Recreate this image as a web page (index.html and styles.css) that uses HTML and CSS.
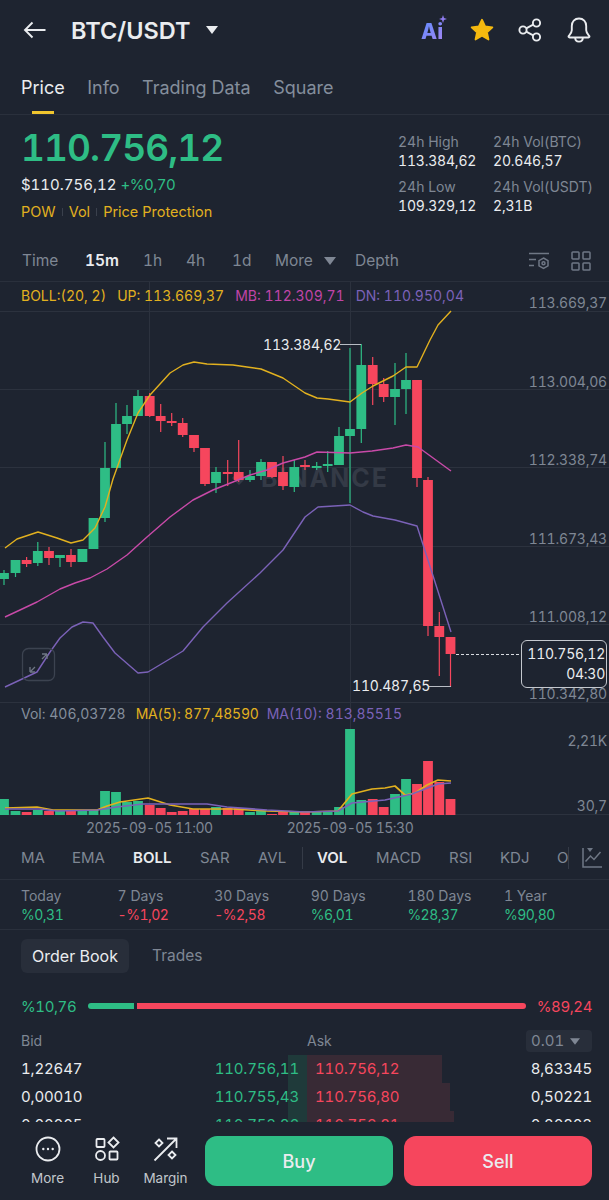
FILE: index.html
```html
<!DOCTYPE html>
<html lang="en">
<head>
<meta charset="utf-8">
<title>BTC/USDT</title>
<link rel="stylesheet" href="styles.css">
</head>
<body>
<div class="app">
  <header class="topbar">
    <svg class="ico-back" viewBox="0 0 24 18" width="24" height="18"><path d="M22.5 9H2M9.5 1.5 2 9l7.5 7.5"/></svg>
    <h1 class="pair">BTC/USDT</h1>
    <svg class="ico-caret" viewBox="0 0 12 8" width="12" height="8"><path d="M0 0h12L6 8z"/></svg>
    <div class="top-actions">
      <span class="ai"><span class="ai-text">Ai</span><svg class="ai-spark" viewBox="0 0 8 8" width="8" height="8"><path d="M4 0 5 3l3 1-3 1-1 3-1-3-3-1 3-1z"/></svg></span>
      <svg class="ico-star" viewBox="0 0 24 24" width="26" height="26"><path d="M12 2.5l2.9 6.2 6.7.8-5 4.6 1.4 6.7-6-3.4-6 3.4 1.4-6.7-5-4.6 6.7-.8z"/></svg>
      <svg class="ico-line ico-share" viewBox="0 0 24 24" width="24" height="24"><circle cx="18.5" cy="5" r="3.6"/><circle cx="5" cy="12" r="3.6"/><circle cx="18.5" cy="19" r="3.6"/><path d="M8.2 10.3l7-3.6M8.2 13.7l7 3.6"/></svg>
      <svg class="ico-line ico-bell" viewBox="0 0 24 26" width="24" height="26"><path d="M12 1.5c-4.4 0-7.2 3.3-7.2 7.4v4.4c0 2.400-1.600 3.800-3 5.500-.6.800-.2 1.700.8 1.700h18.800c1 0 1.400-.9.8-1.700-1.400-1.700-3-3.100-3-5.500V8.900c0-4.100-2.800-7.400-7.200-7.400z"/><path d="M8.200 20.800c0 2.300 1.700 3.800 3.800 3.800s3.800-1.500 3.800-3.800"/></svg>
    </div>
  </header>

  <nav class="tabs">
    <span class="tab tab-on">Price</span>
    <span class="tab">Info</span>
    <span class="tab">Trading Data</span>
    <span class="tab">Square</span>
  </nav>

  <section class="ticker">
    <div class="ticker-main">
      <div class="last">110.756,12</div>
      <div class="sub"><span class="sub-usd">$110.756,12</span> <span class="up sub-pct">+%0,70</span></div>
      <div class="tags"><span>POW</span><i></i><span>Vol</span><i></i><span>Price Protection</span></div>
    </div>
    <div class="ticker-stats">
      <div class="stat"><span>24h High</span><b>113.384,62</b></div>
      <div class="stat"><span>24h Vol(BTC)</span><b>20.646,57</b></div>
      <div class="stat"><span>24h Low</span><b>109.329,12</b></div>
      <div class="stat"><span>24h Vol(USDT)</span><b>2,31B</b></div>
    </div>
  </section>

  <div class="intervals">
    <span class="iv iv-time">Time</span>
    <span class="iv iv-15 iv-on">15m</span>
    <span class="iv iv-1h">1h</span>
    <span class="iv iv-4h">4h</span>
    <span class="iv iv-1d">1d</span>
    <span class="iv iv-more">More</span>
    <svg class="ico-more" viewBox="0 0 12 8" width="12" height="8"><path d="M0 0h12L6 8z"/></svg>
    <span class="iv iv-depth">Depth</span>
    <svg class="ico-dim ico-set" viewBox="0 0 22 20" width="22" height="20"><path d="M1 1.500h20M1 7.500h7M1 13.500h5"/><path d="M15.500 6l4.500 2.600v5.200L15.500 16.400 11 13.800V8.600z"/><circle cx="15.500" cy="11.200" r="1.500"/></svg>
    <svg class="ico-dim ico-grid" viewBox="0 0 20 20" width="20" height="20"><rect x="1" y="1" width="7" height="7" rx=".8"/><rect x="12" y="1" width="7" height="7" rx=".8"/><rect x="1" y="12" width="7" height="7" rx=".8"/><rect x="12" y="12" width="7" height="7" rx=".8"/></svg>
  </div>

  <div class="legend guides">
    <span class="c-yel">BOLL:(20, 2)</span>
    <span class="c-yel">UP: 113.669,37</span>
    <span class="c-mag">MB: 112.309,71</span>
    <span class="c-pur">DN: 110.950,04</span>
  </div>

  <svg class="plot" viewBox="0 311 609 392" width="609" height="392">
    <path class="grid" d="M0 311.500H609M0 389.500H609M0 467.500H609M0 546.500H609M0 624.500H609M0 702.500H609M149.500 311V703M350.500 311V703"/>
    <path class="mark" d="M232 478l7-7 7 7-7 7z"/>
    <text class="wm" x="261" y="487">BINANCE</text>
    <path class="wick-g" d="M4 570V585M15.500 560V577M37.800 542V566M60 555V567M105 442V522M116 403V467M127 405V434M138 390V416M216 467V493M250 470V482M261 459V480M294.300 460V492M316.700 462V470M327.700 451V472M339 427V465M350 348V503M361.300 344V443M395 363V425M406 353V414"/>
    <path class="body-g" d="M4 573V579M15.500 560V573M37.800 551V563M60 555V558M82.400 549V562M93.500 518V549M105 468V518M116 424V468M127 416V424M138 396V416M216 472V483M250 476V480M261 462V476M294.300 467V487M316.700 466V468M327.700 464V466M339 436V465M350 429V436M361.300 365V429M395 389V397M406 380V389"/>
    <path class="wick-r" d="M26.600 557V567M49 547V565M71 549V567M149.700 393V417M160.700 404V432M171.700 413V426M182.700 418V437M194 435V452M205 448V486M227.700 460V486M238.700 440V482M272 462V478M283 456V490M305 460V470M372.700 357V405M383.700 378V402M417 380V487M428 477V636M439.300 612V676M450.500 637V687"/>
    <path class="body-r" d="M26.600 560V564M49 551V558M71 555V562M149.700 396V416M160.700 416V421M171.700 421V423M182.700 423V435M194 435V448M205 448V484M227.700 472V474M238.700 472V480M272 462V477M283 472V486M305 465V467M372.700 365V384M383.700 384V397M417 380V478M428 480V626M439.300 626V637M450.500 637V654"/>
    <polyline class="ln-y" points="5,548 17,539 38,532 57,538 71,543 83,540 95,528 105,507 113,479 127,440 138,413 150,395 170,373 183,365 194,362 207,364 233,365 247,367 261,369 283,378 305,393 317,398 328,399 350,402 362,393 373,386 393,376 406,367 417,367 430,340 438,325 451,311"/>
    <polyline class="ln-m" points="5,617 20,610 37,602 60,589 75,583 90,578 107,569 127,555 147,537 170,517 193,500 213,490 233,482 250,475 267,470 283,463 305,457 317,452 350,453 372,451 393,448 406,445 418,447 451,471"/>
    <polyline class="ln-p" points="5,687 20,680 37,672 50,652 60,638 72,627 83,622 93,623 103,637 115,653 138,673 148,672 163,663 183,651 203,627 227,603 260,573 283,550 305,517 318,507 350,505 363,512 373,516 395,520 417,526 427,557 451,632"/>
    <rect class="expand" x="22.500" y="648.500" width="32" height="32" rx="6"/>
    <path class="expand-arrow" d="M30 672l5-5M42 659l5-5M47 654h-5M47 654v5M30 672v-5M30 672h5"/>
    <path class="tick" d="M340 344.500H361"/>
    <path class="tick" d="M429 686.500H451"/>
    <path class="dash" d="M456 654.500H521"/>
    <text class="lbl-w" x="263" y="350">113.384,62</text>
    <text class="lbl-w" x="352" y="691">110.487,65</text>
    <text class="axis" x="607" y="308">113.669,37</text>
    <text class="axis" x="607" y="387">113.004,06</text>
    <text class="axis" x="607" y="465">112.338,74</text>
    <text class="axis" x="607" y="544">111.673,43</text>
    <text class="axis" x="607" y="622">111.008,12</text>
    <text class="axis" x="607" y="699">110.342,80</text>
  </svg>
  <div class="tag-now"><span>110.756,12</span><span>04:30</span></div>

  <div class="legend-vol guides">
    <span class="c-dim">Vol: 406,03728</span>
    <span class="c-yel">MA(5): 877,48590</span>
    <span class="c-pur">MA(10): 813,85515</span>
  </div>

  <svg class="vol" viewBox="0 723 609 92" width="609" height="92">
    <path class="grid" d="M149.500 723V815M350.500 723V815M0 814.500H609"/>
    <path class="bar-g" d="M4 799V815M15.500 811V815M37.800 810V815M60 811V815M82.400 811V815M93.500 810V815M105 791V815M116 792V815M127 802V815M138 801V815M216 807V815M250 812V815M261 810V815M294.300 812V815M316.700 812V815M327.700 812V815M339 807V815M350 729V815M361.300 800V815M395 794V815M406 779V815"/>
    <path class="bar-r" d="M26.600 812V815M49 811V815M71 811V815M149.700 805V815M160.700 808V815M171.700 812V815M182.700 811V815M194 809V815M205 809V815M227.700 808V815M238.700 808V815M272 814V815M283 812V815M305 812V815M372.700 799V815M383.700 807V815M417 784V815M428 761V815M439.300 782V815M450.500 799V815"/>
    <polyline class="ln-y ln-thick" points="5,808 37,807 53,810 97,810 107,806 120,802 148,798 170,805 193,809 233,809 267,811 305,812 338,811 352,794 372,789 385,788 395,786 405,795 415,793 427,785 438,780 451,781"/>
    <polyline class="ln-p ln-thick" points="5,809 40,809 57,811 97,810 117,807 143,804 207,804 227,807 267,810 305,812 338,811 352,803 385,800 412,794 438,784 451,783"/>
    <text class="axis" x="607" y="746">2,21K</text>
    <text class="axis" x="607" y="811">30,7</text>
  </svg>

  <div class="dates"><span>2025-09-05 11:00</span><span>2025-09-05 15:30</span></div>

  <div class="indicators">
    <span class="ind i1">MA</span>
    <span class="ind i2">EMA</span>
    <span class="ind i3 ind-on">BOLL</span>
    <span class="ind i4">SAR</span>
    <span class="ind i5">AVL</span>
    <i class="ind-sep"></i>
    <span class="ind i6 ind-on">VOL</span>
    <span class="ind i7">MACD</span>
    <span class="ind i8">RSI</span>
    <span class="ind i9">KDJ</span>
    <span class="ind i10">OBV</span>
    <i class="ind-sep2"></i>
    <svg class="ico-dim ico-chart" viewBox="0 0 20 22" width="20" height="22"><path d="M1 1v19h19"/><path d="M3.500 14.500 8.500 9l3.500 3.500L18.500 5"/><path class="fill-dim" d="M5 1h6L8 5z"/></svg>
  </div>

  <div class="periods">
    <div class="per"><span>Today</span><b class="up">%0,31</b></div>
    <div class="per"><span>7 Days</span><b class="dn">-%1,02</b></div>
    <div class="per"><span>30 Days</span><b class="dn">-%2,58</b></div>
    <div class="per"><span>90 Days</span><b class="up">%6,01</b></div>
    <div class="per"><span>180 Days</span><b class="up">%28,37</b></div>
    <div class="per"><span>1 Year</span><b class="up">%90,80</b></div>
  </div>

  <div class="book-tabs">
    <span class="book-tab book-on">Order Book</span>
    <span class="book-tab">Trades</span>
  </div>

  <div class="ratio">
    <span class="ratio-l up">%10,76</span>
    <div class="ratio-bar"><i class="ratio-g"></i><i class="ratio-r"></i></div>
    <span class="ratio-e dn">%89,24</span>
  </div>

  <div class="book-head">
    <span class="bh-bid">Bid</span>
    <span class="bh-ask">Ask</span>
    <span class="prec">0.01<svg viewBox="0 0 12 8" width="10" height="7"><path d="M0 0h12L6 8z"/></svg></span>
  </div>

  <div class="book">
    <div class="row"><i class="d-g"></i><i class="d-r" style="width:135px"></i><span class="q">1,22647</span><span class="bp up">110.756,11</span><span class="ap dn">110.756,12</span><span class="q2">8,63345</span></div>
    <div class="row"><i class="d-g"></i><i class="d-r" style="width:143px"></i><span class="q">0,00010</span><span class="bp up">110.755,43</span><span class="ap dn">110.756,80</span><span class="q2">0,50221</span></div>
    <div class="row"><i class="d-g"></i><i class="d-r" style="width:147px"></i><span class="q">0,00005</span><span class="bp up">110.753,86</span><span class="ap dn">110.756,81</span><span class="q2">0,20803</span></div>
  </div>

  <footer class="foot">
    <div class="foot-nav">
      <div class="fn">
        <svg class="ico-line ico-foot" viewBox="0 0 26 26" width="26" height="26"><circle cx="13" cy="13" r="11.500"/><path class="dots" d="M8.300 13h.01M13 13h.01M17.700 13h.01"/></svg>
        <span>More</span>
      </div>
      <div class="fn">
        <svg class="ico-line ico-foot" viewBox="0 0 26 26" width="26" height="26"><rect x="2.500" y="3" width="8" height="8" rx=".8"/><path d="M19.500 1.500l5 5-5 5-5-5z"/><circle cx="6.500" cy="19.500" r="4.500"/><rect x="15.500" y="15.500" width="8" height="8" rx=".8"/></svg>
        <span>Hub</span>
      </div>
      <div class="fn">
        <svg class="ico-line ico-foot" viewBox="0 0 26 26" width="26" height="26"><path d="M1.500 24.500 23.500 2.500M14 2.500h9.500V12"/><path d="M6 3.500l3.500 3.500L6 10.500 2.500 7z"/><path d="M19 15.500l3.500 3.500-3.500 3.500-3.500-3.500z"/></svg>
        <span>Margin</span>
      </div>
    </div>
    <button class="btn btn-buy">Buy</button>
    <button class="btn btn-sell">Sell</button>
  </footer>
</div>
</body>
</html>
```
FILE: styles.css
```css
* { box-sizing: border-box; }
html, body { margin: 0; padding: 0; background: #1e2430; }
body { font-family: Inter, "Liberation Sans", sans-serif; color: #eaecef; font-variant-numeric: tabular-nums; }
.app { position: relative; width: 609px; height: 1200px; overflow: hidden; background: #1e2430; }
i { display: block; font-style: normal; }
svg { display: block; }

.up { color: #2ebd85; }
.dn { color: #f6465d; }
.c-yel { color: #e2b11f; }
.c-mag { color: #c044a8; }
.c-pur { color: #7b62b8; }
.c-dim { color: #848e9c; }

/* top bar */
.topbar { height: 60px; display: flex; align-items: center; padding: 0 18px 0 23px; }
.ico-back { fill: none; stroke: #eaecef; stroke-width: 1.9; }
.pair { margin: 0 0 0 24px; font-size: 23.500px; font-weight: 600; letter-spacing: 0; }
.ico-caret { margin-left: 15px; fill: #eaecef; }
.top-actions { margin-left: auto; display: flex; align-items: center; }
.ai { position: relative; width: 26px; height: 26px; display: block; margin-right: 22px; margin-top: 4px; }
.ai-text { font-size: 21px; font-weight: 800; line-height: 26px; background: linear-gradient(135deg, #5b8cff, #a884f0); -webkit-background-clip: text; background-clip: text; color: transparent; }
.ai-spark { position: absolute; right: 0; top: -4px; fill: #8f7cf0; }
.ico-star { fill: #f5b90f; stroke: #f5b90f; stroke-width: 1.600; stroke-linejoin: round; }
.ico-line { fill: none; stroke: #eaecef; stroke-width: 1.900; }
.ico-share { margin-left: 23px; }
.ico-bell { margin-left: 25px; }

/* tabs */
.tabs { height: 55px; display: flex; align-items: flex-start; padding: 17px 0 0 21px; gap: 22.500px; border-bottom: 1px solid #2a303c; }
.tab { position: relative; font-size: 18px; line-height: 22px; color: #848e9c; }
.tab-on { color: #eaecef; }
.tab-on::after { content: ""; position: absolute; left: 11px; right: 11px; top: 34px; height: 3px; background: #f0c52e; }

/* ticker */
.ticker { height: 126px; display: flex; justify-content: space-between; padding: 0 0 0 21px; }
.ticker-main { display: flex; flex-direction: column; }
.last { margin-top: 12px; font-size: 37px; line-height: 42px; font-weight: 600; color: #2ebd85; letter-spacing: -.9px; }
.sub { margin-top: 6px; font-size: 15px; line-height: 20px; }
.sub-pct { letter-spacing: -.5px; }
.tags { margin-top: 7px; display: flex; align-items: center; font-size: 14.500px; line-height: 20px; color: #e2b11f; }
.tags i { width: 1px; height: 8px; margin: 0 6px; background: #3a404c; }
.ticker-stats { width: 211px; display: grid; grid-template-columns: 95px 116px; grid-auto-rows: 44.500px; padding-top: 17px; }
.stat { display: flex; flex-direction: column; font-size: 14px; line-height: 19px; }
.stat span { color: #7f8794; }
.stat b { font-weight: 400; color: #eaecef; letter-spacing: -.2px; }

/* intervals */
.intervals { position: relative; height: 41px; border-bottom: 1px solid #2a303c; }
.iv { position: absolute; top: 10px; font-size: 15.500px; line-height: 20px; color: #7f8794; }
.iv-on { color: #eaecef; font-weight: 600; }
.iv-time { left: 22px; }
.iv-15 { left: 85px; }
.iv-1h { left: 143px; }
.iv-4h { left: 186px; }
.iv-1d { left: 232px; }
.iv-more { left: 275px; }
.ico-more { position: absolute; left: 324px; top: 16px; fill: #7f8794; }
.iv-depth { left: 355px; }
.ico-dim { fill: none; stroke: #6f7785; stroke-width: 1.500; }
.fill-dim { fill: #6f7785; stroke: none; }
.ico-set { position: absolute; left: 528px; top: 11px; }
.ico-grid { position: absolute; left: 571px; top: 10px; }

/* chart legends */
.guides { background-image: linear-gradient(#2c323e, #2c323e), linear-gradient(#2c323e, #2c323e); background-size: 1px 100%, 1px 100%; background-position: 149px 0, 350px 0; background-repeat: no-repeat; }
.legend { height: 29px; display: flex; align-items: center; padding: 0 0 2px 21px; gap: 11px; font-size: 14px; white-space: nowrap; }
.plot { overflow: visible; }
.grid { fill: none; stroke: #2c323e; stroke-width: 1; }
.wick-g, .wick-r, .body-g, .body-r, .bar-g, .bar-r { fill: none; }
.wick-g { stroke: #2ebd85; stroke-width: 1.200; }
.wick-r { stroke: #f6465d; stroke-width: 1.200; }
.body-g, .bar-g { stroke: #2ebd85; stroke-width: 9.800; }
.body-r, .bar-r { stroke: #f6465d; stroke-width: 9.800; }
.ln-y, .ln-m, .ln-p { fill: none; stroke-width: 1.400; stroke-linejoin: round; }
.ln-y { stroke: #e2b11f; }
.ln-m { stroke: #c84aa8; }
.ln-p { stroke: #7b62b8; }
.ln-thick { stroke-width: 1.700; }
.wm { font-family: Inter, sans-serif; font-size: 25px; font-weight: 700; fill: #343a46; letter-spacing: 2px; }
.mark { fill: #343a46; }
.expand { fill: none; stroke: #3c4350; stroke-width: 1.300; }
.expand-arrow { fill: none; stroke: #6f7785; stroke-width: 1.300; }
.tick { fill: none; stroke: #b8bcc4; stroke-width: 1; }
.dash { fill: none; stroke: #d8dbe0; stroke-width: 1; stroke-dasharray: 3 2; }
.lbl-w { font-family: Inter, sans-serif; font-size: 14px; fill: #eaecef; font-variant-numeric: tabular-nums; letter-spacing: -.2px; }
.axis { font-family: Inter, sans-serif; font-size: 14px; fill: #7f8794; text-anchor: end; font-variant-numeric: tabular-nums; letter-spacing: -.2px; }

/* last-price flag lies over the chart */
.tag-now { position: absolute; left: 521px; top: 640px; width: 86px; height: 48px; display: flex; flex-direction: column; align-items: flex-end; justify-content: center; padding-right: 1px; background: #1e2430; border: 1px solid #c4c8ce; border-radius: 6px; font-size: 14px; line-height: 20px; color: #eaecef; letter-spacing: -.25px; }

.legend-vol { height: 20px; display: flex; align-items: center; padding: 0 0 0 21px; gap: 10px; font-size: 14px; white-space: nowrap; }
.legend-vol span:nth-child(2) { letter-spacing: -.2px; }
.legend-vol span:nth-child(3) { margin-left: -2px; }
.vol { overflow: visible; }
.dates { height: 24px; display: flex; gap: 74px; padding-left: 86px; align-items: center; font-size: 14px; color: #7f8794; letter-spacing: -.5px; }

/* indicators */
.indicators { position: relative; height: 41px; border-bottom: 1px solid #2a303c; overflow: hidden; }
.ind { position: absolute; top: 9px; font-size: 15px; line-height: 20px; color: #7f8794; }
.ind-on { color: #eaecef; font-weight: 600; }
.i1 { left: 21px; } .i2 { left: 72px; } .i3 { left: 133px; } .i4 { left: 200px; } .i5 { left: 258px; }
.i6 { left: 317px; } .i7 { left: 376px; } .i8 { left: 449px; } .i9 { left: 500px; }
.i10 { left: 557px; width: 11px; overflow: hidden; white-space: nowrap; }
.ind-sep { position: absolute; left: 302px; top: 8px; width: 1px; height: 22px; background: #353b47; }
.ind-sep2 { position: absolute; left: 568px; top: 8px; width: 1px; height: 22px; background: #353b47; }
.ico-chart { position: absolute; left: 582px; top: 8px; }

/* periods */
.periods { height: 50px; display: grid; grid-template-columns: repeat(6, 96.600px); padding: 6px 0 0 21px; border-bottom: 1px solid #2a303c; }
.per { display: flex; flex-direction: column; font-size: 14px; line-height: 19px; }
.per span { color: #7f8794; }
.per b { font-weight: 400; letter-spacing: -.5px; }

/* order book */
.book-tabs { display: flex; align-items: center; padding: 9px 0 0 21px; gap: 23px; }
.book-tab { font-size: 15.500px; line-height: 34px; color: #7f8794; }
.book-on { width: 108px; text-align: center; font-size: 16px; background: #282e3a; color: #eaecef; border-radius: 6px; }
.ratio { height: 20px; margin-top: 23px; display: flex; align-items: center; padding: 0 17px 0 21px; font-size: 15px; white-space: nowrap; letter-spacing: -.4px; }
.ratio-l { width: 67px; }
.ratio-e { flex: 1; text-align: right; }
.ratio-bar { width: 438px; display: flex; gap: 3px; height: 6px; }
.ratio-g { width: 46px; background: #2ebd85; border-radius: 3px 0 0 3px; }
.ratio-r { flex: 1; background: #f6465d; border-radius: 0 3px 3px 0; }
.book-head { position: relative; height: 22px; margin-top: 14px; font-size: 14px; line-height: 22px; color: #7f8794; }
.bh-bid { position: absolute; left: 21px; }
.bh-ask { position: absolute; left: 307px; }
.prec { position: absolute; left: 526px; top: 0; width: 66px; height: 22px; display: flex; align-items: center; gap: 6px; padding-left: 5px; font-size: 15px; background: #282e3a; border-radius: 4px; }
.prec svg { fill: #7f8794; }
.book { height: 67px; margin-top: 3px; overflow: hidden; }
.row { position: relative; height: 28px; font-size: 15px; line-height: 28px; letter-spacing: -.15px; }
.row span { position: absolute; top: 0; }
.d-g { position: absolute; left: 288px; top: 0; width: 19px; height: 28px; background: #1f3a3a; }
.d-r { position: absolute; left: 307px; top: 0; height: 28px; background: #382a35; }
.q { left: 21px; }
.bp { right: 310px; }
.ap { left: 315px; }
.q2 { right: 17px; }

/* footer */
.foot { height: 78px; display: flex; align-items: flex-start; padding: 14px 17px 0 18px; background: #1e2430; }
.foot-nav { width: 177px; margin-right: 10px; display: flex; }
.fn { width: 59px; display: flex; flex-direction: column; align-items: center; font-size: 13.500px; color: #c2c6cc; }
.fn span { margin-top: 7px; line-height: 18px; white-space: nowrap; }
.ico-foot { stroke-width: 1.800; }
.dots { stroke-width: 2.400; stroke-linecap: round; }
.btn { width: 188px; height: 50px; border: 0; border-radius: 12px; color: #eaecef; font: 500 18px Inter, sans-serif; }
.btn-buy { background: #2ebd85; margin-right: 11px; }
.btn-sell { background: #f6465d; }
```
